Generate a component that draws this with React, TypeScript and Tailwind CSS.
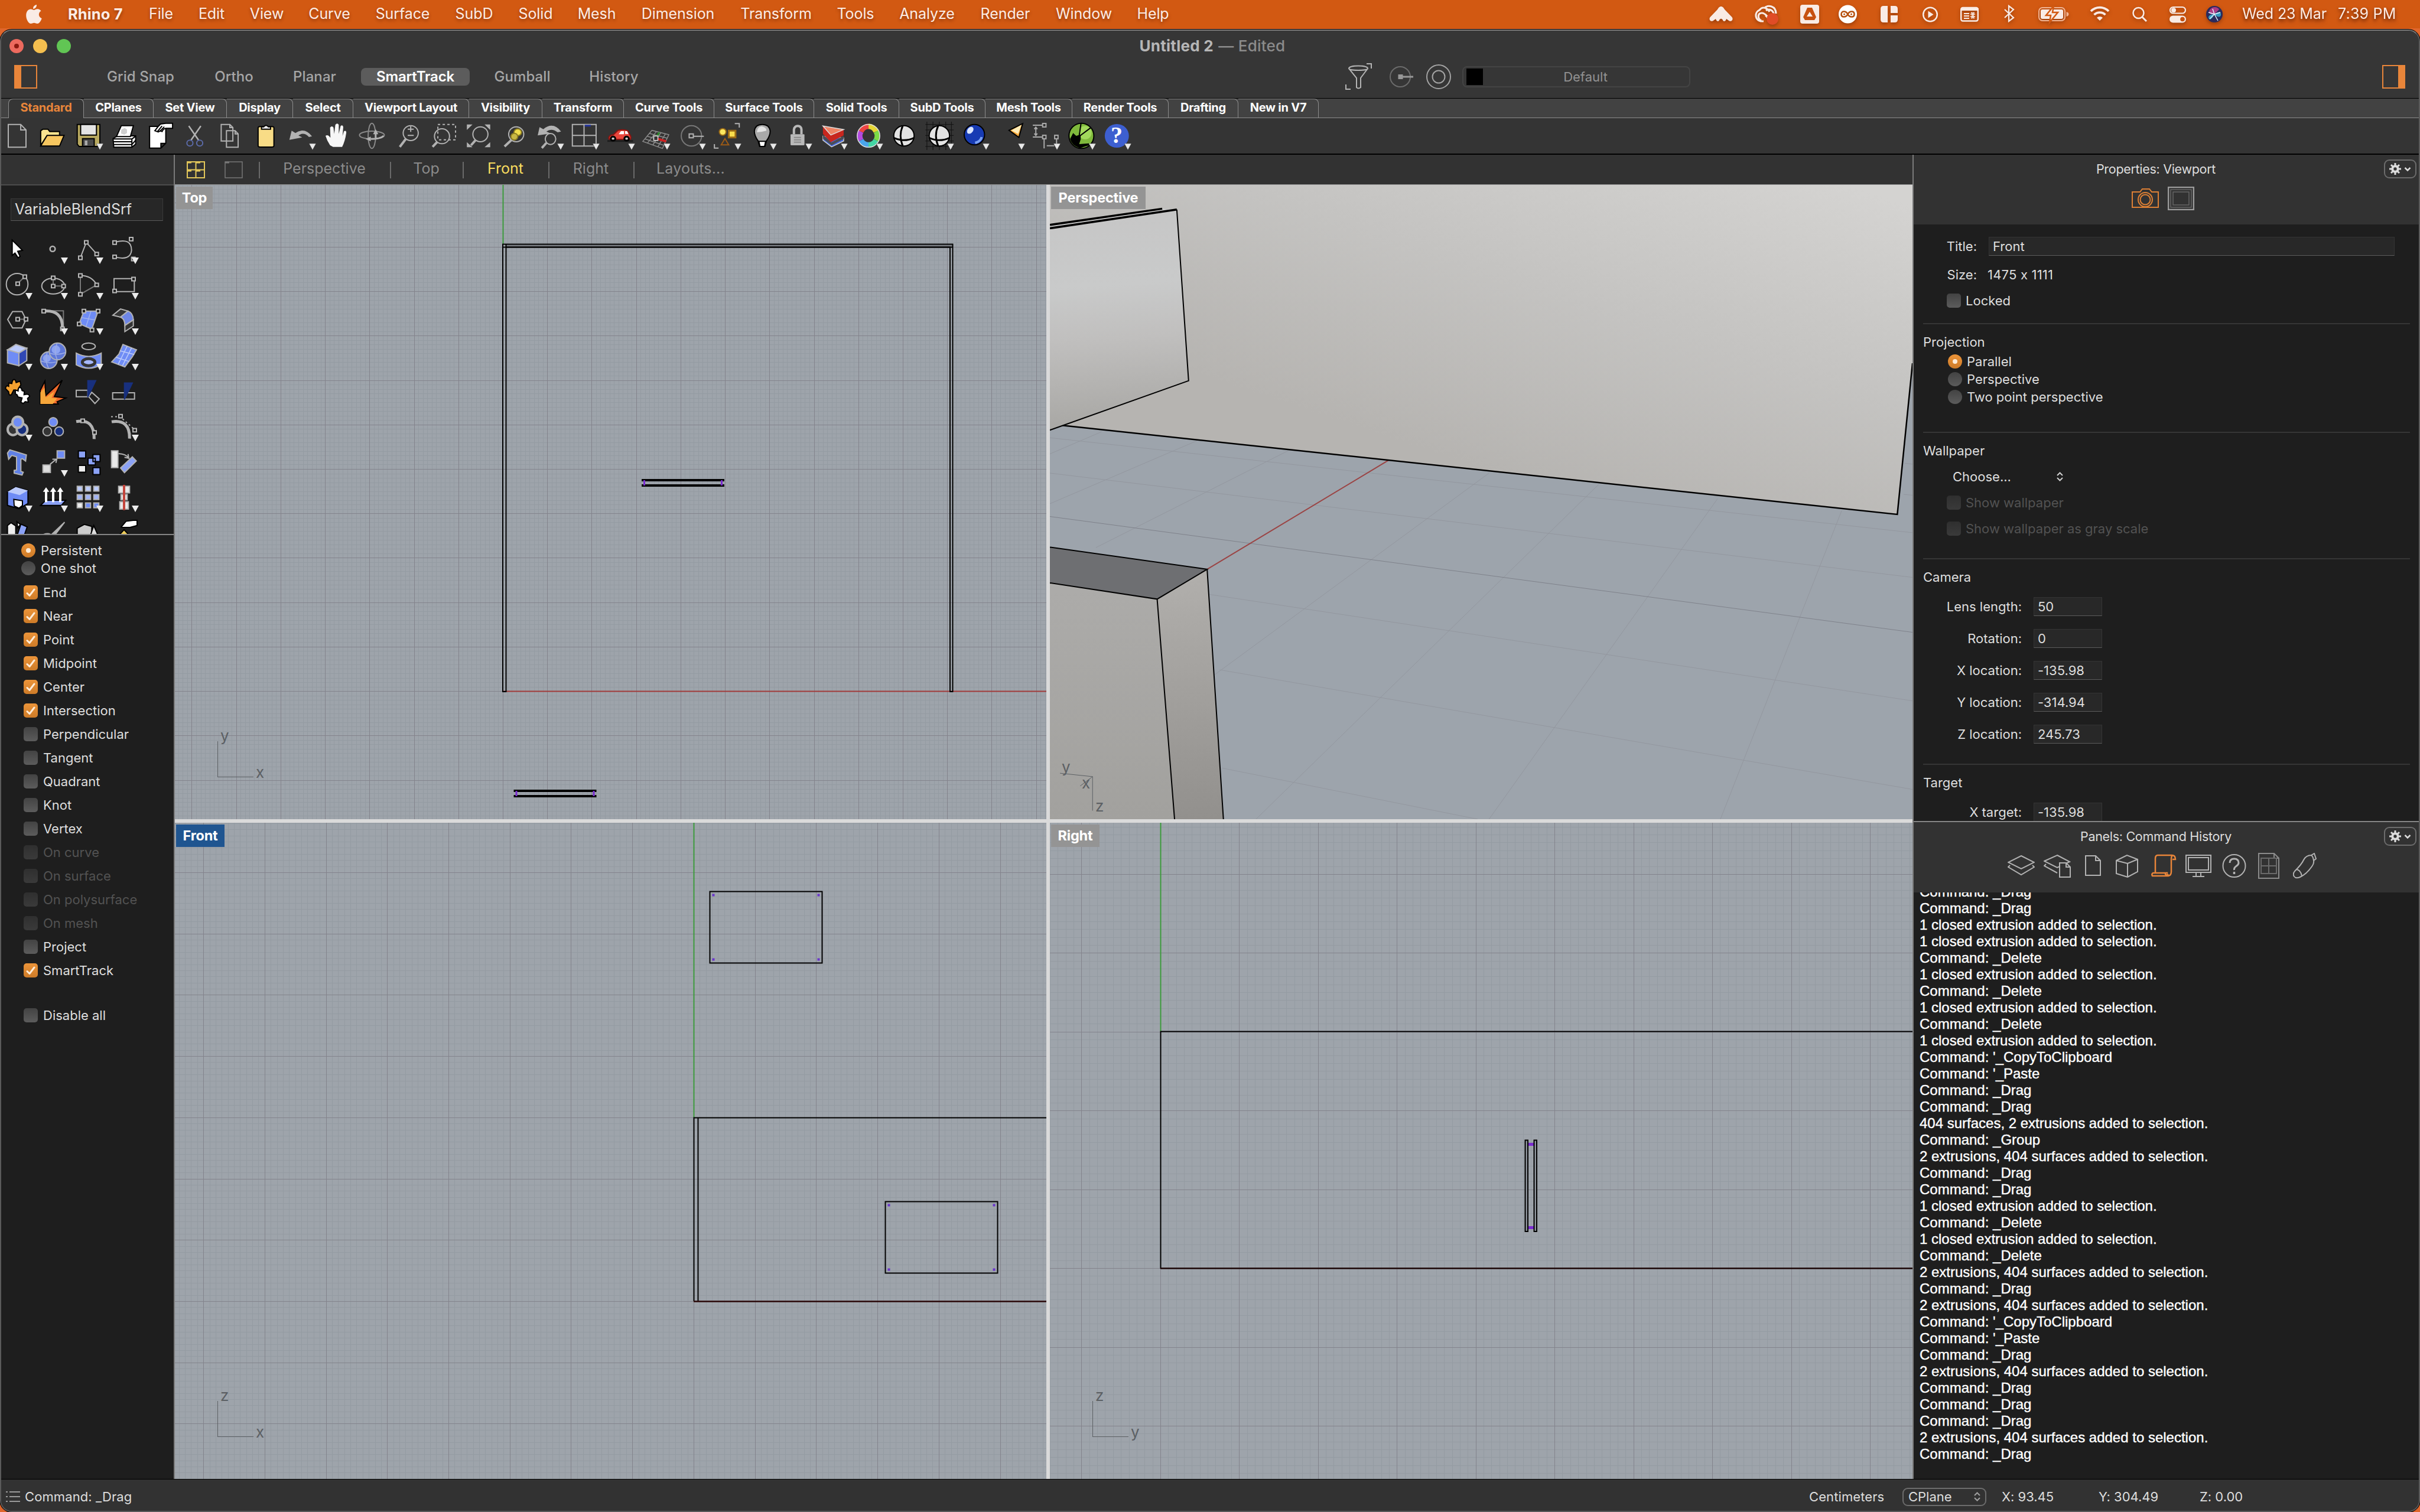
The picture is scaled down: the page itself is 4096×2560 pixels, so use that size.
import type { ReactNode } from "react";

/* ------------------------------------------------------------------ */
/* Menu bar                                                            */
/* ------------------------------------------------------------------ */

const menus: [string, string][] = [
  ["File", "w-[41px]"],
  ["Edit", "w-[46px]"],
  ["View", "w-[57px]"],
  ["Curve", "w-[71px]"],
  ["Surface", "w-[93px]"],
  ["SubD", "w-[65px]"],
  ["Solid", "w-[59px]"],
  ["Mesh", "w-[64px]"],
  ["Dimension", "w-[127px]"],
  ["Transform", "w-[121px]"],
  ["Tools", "w-[64px]"],
  ["Analyze", "w-[94px]"],
  ["Render", "w-[87px]"],
  ["Window", "w-[95px]"],
  ["Help", "w-[55px]"],
];

function StatusIcon({ cls, w, children }: { cls: string; w: number; children: ReactNode }) {
  return (
    <svg className={`h-12 shrink-0 overflow-visible ${cls}`} viewBox={`0 0 ${w} 48`} fill="none">
      {children}
    </svg>
  );
}

function MenuBar() {
  const c = "#f9ebe5";
  return (
    <div className="flex h-12 items-center bg-[#d25912] text-[25px] tracking-[-0.1px] text-[#fcece4] [text-shadow:0_3px_5px_rgba(70,20,0,.45)]">
      <svg className="ml-11 h-[34px] w-[27px] shrink-0" viewBox="0 0 27 34" fill={c}>
        <path d="M18 1c.3 3.800-2.600 7-6 7C11.700 4.500 14.500 1.400 18 1Z" />
        <path d="M13.500 10c1.500 0 3.300-1.700 6-1.700 2.600 0 4.700 1.300 6 3.200-5.400 3.100-4.600 10.400 1.200 12.700C25.300 28 22.600 33 19.300 33c-2.300 0-3-1.300-5.600-1.300-2.500 0-3.500 1.300-5.600 1.300C4.400 33 .2 26 .2 19.300.2 12.500 4 8.600 8 8.600c2.400 0 4 1.400 5.500 1.400Z" />
      </svg>
      <div className="ml-11 w-[95px] text-[25.500px] font-bold tracking-[0.1px] whitespace-nowrap">Rhino 7</div>
      <div className="ml-[42px] flex gap-[42px]">
        {menus.map(([m, w]) => (
          <div key={m} className={`${w} flex shrink-0 justify-center whitespace-nowrap`}>
            {m}
          </div>
        ))}
      </div>
      <div className="ml-auto flex items-center drop-shadow-[0_3px_3px_rgba(70,20,0,.4)]">
        <StatusIcon cls="w-[40px]" w={40}>
          <path d="M20 11c3 0 4.500 2.500 6 5l12.500 13c3 4-1 8-4.500 6.500L29 32c-1.500 5-5.500 5-6.500 1l-2.500-1.500L17.500 33c-1 4-5 4-6.500-1l-5 3.500C2.500 37-1.500 33 1.500 29L14 16c1.500-2.500 3-5 6-5Z" fill={c} />
        </StatusIcon>
        <StatusIcon cls="ml-9 w-[40px]" w={40}>
          <path d="M16 36H11A10 10 0 0 1 9 17C14 10 22 13 26 20M12 35C5 31 6 22 13 22s9 8 14 9M17 14c6-7 20-4 20 9M20 18c5-4 13-1 13 7M19 26c4 2 5 8 8 9" stroke={c} strokeWidth="3.200" />
          <circle cx="31" cy="32" r="10" fill="#e04c26" />
        </StatusIcon>
        <StatusIcon cls="ml-[38px] w-[32px]" w={32}>
          <rect y="8" width="32" height="32" rx="4" fill={c} />
          <path d="M12 13h8l7 16-3 5H8l-3-5ZM16 20l-5 8h10Z" fill="#c75110" fillRule="evenodd" />
        </StatusIcon>
        <StatusIcon cls="ml-[33px] w-[31px]" w={31}>
          <circle cx="15.500" cy="24" r="15.500" fill="#fff" />
          <path d="M15.500 24c-3-6-11-6-11 0s8 6 11 0c3-6 11-6 11 0s-8 6-11 0Z" stroke="#b5500f" strokeWidth="2.600" />
          <circle cx="9.500" cy="24" r="1.500" fill="#b5500f" />
          <circle cx="21.500" cy="24" r="1.500" fill="#b5500f" />
        </StatusIcon>
        <StatusIcon cls="ml-10 w-[29px]" w={29}>
          <path d="M5 10h7v28H5q-5 0-5-5V15q0-5 5-5ZM17 10h7q5 0 5 5v7H17ZM17 26h12v7q0 5-5 5h-7Z" fill={c} />
        </StatusIcon>
        <StatusIcon cls="ml-[42px] w-[26px]" w={26}>
          <circle cx="13" cy="24.500" r="11.800" stroke={c} strokeWidth="2.500" />
          <path d="M9.500 18.500v12l9-6Z" fill={c} />
        </StatusIcon>
        <StatusIcon cls="ml-[38px] w-[31px]" w={31}>
          <rect x="1.200" y="13" width="28.600" height="22.500" rx="3" stroke={c} strokeWidth="2.400" />
          <path d="M1 14h30v4H1ZM6 22h9v2H6ZM6 26h9v2H6ZM6 30h9v2H6Z" fill={c} />
          <path d="M18 21.500h2v9h-2m6-9h-2v9h2M17 24h8M17 28h8" stroke={c} strokeWidth="1.500" />
        </StatusIcon>
        <StatusIcon cls="ml-[43px] w-[18px]" w={18}>
          <path d="m1 16 15 14-8 6V10l8 6L1 30" stroke={c} strokeWidth="2.200" />
        </StatusIcon>
        <StatusIcon cls="ml-10 w-[51px]" w={51}>
          <rect x="1" y="13" width="44" height="22" rx="6" stroke="#f1b392" strokeWidth="2" />
          <path d="M47.500 20v8q4-1 4-4t-4-4Z" fill="#f1b392" />
          <rect x="4" y="16" width="38" height="16" rx="3" fill={c} />
          <path d="M26 10 13 26h8l-2 12 14-17h-9Z" fill={c} stroke="#d25912" strokeWidth="2.500" />
        </StatusIcon>
        <StatusIcon cls="ml-9 w-[34px]" w={34}>
          <path d="M2 19a21 21 0 0 1 30 0M7.500 25a13.500 13.500 0 0 1 19 0" stroke={c} strokeWidth="3.800" />
          <path d="M17 35l-5-5a7 7 0 0 1 10 0Z" fill={c} />
        </StatusIcon>
        <StatusIcon cls="ml-[38px] w-[25px]" w={25}>
          <circle cx="10.500" cy="22" r="9" stroke={c} strokeWidth="2.500" />
          <path d="m17 29 7 7" stroke={c} strokeWidth="3" />
        </StatusIcon>
        <StatusIcon cls="ml-[38px] w-[28px]" w={28}>
          <rect x="1" y="12" width="26" height="10.500" rx="5.250" stroke={c} strokeWidth="2.200" />
          <circle cx="7" cy="17.200" r="4" fill={c} />
          <rect y="26.500" width="28" height="12" rx="6" fill={c} />
          <circle cx="22" cy="32.500" r="3.800" fill="#c75110" />
        </StatusIcon>
        <StatusIcon cls="ml-[34px] w-[28px]" w={28}>
          <circle cx="14" cy="24" r="14" fill="#2a2a5c" />
          <path d="M14 24C4 26 2 18 10 13q8-3 12 3Z" fill="#c33d8c" opacity=".85" />
          <path d="M14 24c-8 0-12 4-9 8q4 3 9-8ZM14 24c8-6 12-4 11 2q-3 6-11-2Z" fill="#38b7d8" opacity=".8" />
          <path d="m6 32 8-8 6 11M14 24l-3-9m3 9 10-3m-10 3-10-3" stroke="#e4f4ff" strokeWidth="1.400" />
        </StatusIcon>
        <div className="ml-[33px] w-[146px] whitespace-nowrap">Wed 23 Mar</div>
        <div className="ml-4 mr-[38px] w-[101px] tracking-[0.2px] whitespace-nowrap">7:39 PM</div>
      </div>
    </div>
  );
}

/* ------------------------------------------------------------------ */
/* Title bar                                                           */
/* ------------------------------------------------------------------ */

const snapModes: [string, string][] = [
  ["Grid Snap", "w-[160px]"],
  ["Ortho", "w-[116px]"],
  ["Planar", "w-[117px]"],
  ["SmartTrack", "w-[184px]"],
  ["Gumball", "w-[138px]"],
  ["History", "w-[132px]"],
];

function TitleBar() {
  return (
    <div className="h-[115px] border-b border-black bg-[#363636]">
      <div className="flex h-[51px] items-center">
        <div className="ml-[14px] flex w-[200px] gap-4">
          <div className="flex size-6 items-center justify-center rounded-full bg-[#ed6a5e]">
            <div className="size-2 rounded-full bg-[#8c1a10]" />
          </div>
          <div className="size-6 rounded-full bg-[#f5bf4f]" />
          <div className="size-6 rounded-full bg-[#61c554]" />
        </div>
        <div className="flex-1 pl-[8px] text-center text-[26px] font-bold tracking-[0.25px] text-[#b6b6b6]">
          Untitled 2 <span className="pl-[2px] font-medium text-[#8b8b8b]">— Edited</span>
        </div>
        <div className="w-[214px]" />
      </div>
      <div className="flex h-[54px] items-center pr-[23px] pl-[22px]">
        <div className="h-10 w-[39px] border-2 border-l-[12px] border-[#e8853a]" />
        <div className="ml-[95px] flex gap-5 text-[24px] font-medium tracking-[0.1px] text-[#a6a6a6]">
          {snapModes.map(([m, w]) => (
            <div
              key={m}
              className={`${w} flex h-[30px] items-center justify-center rounded-[8px] whitespace-nowrap ${m === "SmartTrack" ? "bg-[#5c5c5c] font-semibold tracking-[-0.2px] text-white" : ""}`}
            >
              {m}
            </div>
          ))}
        </div>
        <svg className="ml-[1172px] h-[46px] w-[46px] shrink-0" viewBox="0 0 46 46" fill="none" stroke="#b4b4b4" strokeWidth="2">
          <path d="M36 1h8v8M1 36v8h8M6 9c0-6 32-6 32 0L26 25v16q-4 3-7 0V25ZM6 9c0 4 32 4 32 0" />
        </svg>
        <svg className="ml-[29px] h-10 w-[42px] shrink-0" viewBox="0 0 42 40" fill="none" strokeWidth="2">
          <circle cx="18" cy="20" r="17" stroke="#6b6b6b" />
          <path d="M18 20h22" stroke="#979797" strokeWidth="3" />
          <path d="M14.500 16h8v8h-8Z" fill="#979797" />
        </svg>
        <svg className="ml-[20px] h-[42px] w-[42px] shrink-0" viewBox="0 0 42 42" fill="none" stroke="#a3a3a3" strokeWidth="2">
          <circle cx="21" cy="21" r="20" />
          <circle cx="21" cy="21" r="10.500" />
        </svg>
        <div className="ml-[19px] flex h-[36px] w-[386px] items-center rounded-[8px] border-2 border-[#444] pl-[5px]">
          <div className="h-7 w-7 bg-black" />
          <div className="flex-1 pr-[2px] text-center text-[22px] leading-none text-[#929292]">Default</div>
        </div>
        <div className="ml-auto h-10 w-[39px] border-2 border-r-[12px] border-[#e8853a]" />
      </div>
    </div>
  );
}

/* ------------------------------------------------------------------ */
/* Toolbar tabs                                                        */
/* ------------------------------------------------------------------ */

const toolTabs: [string, string][] = [
  ["Standard", "w-[128px]"],
  ["CPlanes", "w-[118px]"],
  ["Set View", "w-[124px]"],
  ["Display", "w-[112px]"],
  ["Select", "w-[102px]"],
  ["Viewport Layout", "w-[196px]"],
  ["Visibility", "w-[124px]"],
  ["Transform", "w-[138px]"],
  ["Curve Tools", "w-[153px]"],
  ["Surface Tools", "w-[169px]"],
  ["Solid Tools", "w-[144px]"],
  ["SubD Tools", "w-[146px]"],
  ["Mesh Tools", "w-[147px]"],
  ["Render Tools", "w-[163px]"],
  ["Drafting", "w-[118px]"],
  ["New in V7", "w-[136px]"],
];

function ToolTabs() {
  return (
    <div className="flex h-[33px] bg-[#424242] text-[20px] font-bold tracking-[-0.25px] text-white">
      <div className="w-3 border-b border-[#8c8c8c]" />
      {toolTabs.map(([t, w], i) => (
        <div
          key={t}
          className={`${w} flex shrink-0 items-center justify-center rounded-tr-[8px] border-t border-r border-[#8c8c8c] pb-1 whitespace-nowrap ${i === 0 ? "rounded-tl-[8px] border-l bg-[#353535] text-[#e8853a]" : "border-b"}`}
        >
          {t}
        </div>
      ))}
      <div className="flex-1 border-b border-[#8c8c8c]" />
    </div>
  );
}

/* ------------------------------------------------------------------ */
/* Standard toolbar. Each cell is 60px wide; artwork is drawn on a      */
/* strip that is 94.08 units per cell horizontally and 180 vertically. */
/* ------------------------------------------------------------------ */

const G = "#b2b2b2";

function Mag({ x, y, dx = 16, dy = 40 }: { x: number; y: number; dx?: number; dy?: number }) {
  return (
    <g>
      <ellipse cx={x} cy={y} rx="20" ry="38" stroke={G} fill="none" />
      <path d={`M${x - 13} ${y + 30}l${-dx} ${dy}`} stroke={G} strokeWidth="4" />
    </g>
  );
}

const barIcons: { art: ReactNode; more?: boolean }[] = [
  { art: <path d="M22 632H55L69 660V748H22ZM55 632V660H69" stroke={G} /> },
  {
    art: (
      <g stroke="#000">
        <path d="M108 738V664L114 656H127L132 668H158V692H124Z" fill="#fbe48f" />
        <path d="M125 688H170L158 742H108Z" fill="#f7c760" />
      </g>
    ),
  },
  {
    more: true,
    art: (
      <g stroke="#000">
        <path d="M205 632H265V744H210L205 732Z" fill="#b8a95f" />
        <path d="M214 632H256V686H214Z" fill="#e4e4e4" />
        <path d="M219 704H250V744H219Z" fill="#4a4a4a" />
        <path d="M225 714H232V738H225Z" fill="#aaa" stroke="none" />
      </g>
    ),
  },
  {
    art: (
      <g stroke="#000">
        <path d="M300 704L312 690H360V732L350 748H302Z" fill="#fff" />
        <path d="M309 694L322 638H354L346 694Z" fill="#fff" />
        <path d="M300 706H350V748M300 720H350M302 734H350L360 712M350 706L360 692" fill="none" />
        <path d="M322 658L331 650L337 658V676L330 684L321 678Z" fill="#cfcfcf" stroke="none" />
      </g>
    ),
  },
  {
    art: (
      <g stroke="#000">
        <path d="M397 642H440V728L427 752H397ZM440 728H427V752" fill="#fff" />
        <path d="M411 664L420 642L426 630L440 626H458V652L440 652L434 656L430 668L426 664L420 670Z" fill="#fff" />
        <path d="M418 668L430 640M424 668L436 644" fill="none" />
      </g>
    ),
  },
  {
    art: (
      <g>
        <path d="M501 640L527 712M533 640L507 712" stroke={G} strokeWidth="2.500" />
        <ellipse cx="504" cy="727" rx="8" ry="15" stroke="#5b6aa8" />
        <ellipse cx="530" cy="727" rx="8" ry="15" stroke="#5b6aa8" />
      </g>
    ),
  },
  { art: <path d="M587 632H610L618 648V716H587ZM601 664H624L632 680V748H601ZM610 632V648H618M624 664V680H632" stroke={G} fill="#353535" /> },
  {
    art: (
      <g stroke="#000">
        <rect x="685" y="643" width="42" height="104" rx="6" fill="#f8dc86" />
        <path d="M694 656V644H700Q706 630 712 644H718V656Z" fill="#f2f2f2" />
      </g>
    ),
  },
  { more: true, art: <path d="M768 710L774 664L784 676Q808 644 828 692L820 696Q806 668 792 688L802 698Z" fill={G} stroke="none" /> },
  {
    art: (
      <path
        d="M876 738Q868 716 864 690Q870 680 877 700L876 648Q881 636 885 648L887 680L890 634Q895 622 899 634L899 680L904 640Q910 632 911 646L909 690L913 666Q919 660 919 674Q916 716 908 746H884Z"
        fill="#f6f6f6"
        stroke="none"
      />
    ),
  },
  {
    art: (
      <g>
        <ellipse cx="987" cy="690" rx="10" ry="64" stroke="#8a8a8a" />
        <ellipse cx="987" cy="686" rx="33" ry="20" stroke="#8a8a8a" />
        <path d="M997 656L1004 682H990ZM970 706L984 694V718Z" fill={G} stroke="none" />
        <path d="M997 680V700M984 706Q1010 706 1018 690" stroke={G} strokeWidth="3" />
      </g>
    ),
  },
  { art: <g><Mag x={1090} y={676} /><path d="M1082 656H1098M1090 642V670M1082 688H1098" stroke={G} /></g> },
  { art: <g><path d="M1162 632H1209V710H1162Z" stroke={G} strokeDasharray="4 4" /><Mag x={1173} y={692} dx={12} dy={24} /></g> },
  { art: <g><Mag x={1275} y={682} dx={12} dy={26} /><path d="M1239 632H1254L1239 660ZM1301 632V660L1286 632ZM1239 722V748H1254ZM1301 722V748H1286Z" fill={G} stroke="none" /></g> },
  {
    art: (
      <g>
        <Mag x={1370} y={682} dx={18} dy={32} />
        <ellipse cx="1374" cy="672" rx="10" ry="17" fill="#f1dd4c" stroke="#8f7f20" />
        <ellipse cx="1365" cy="694" rx="9" ry="17" fill="#c8b745" stroke="#8f7f20" />
      </g>
    ),
  },
  {
    more: true,
    art: (
      <g>
        <path d="M1427 688L1432 646L1442 656Q1468 616 1489 668L1480 672Q1464 648 1450 668L1462 678Z" fill={G} stroke="none" />
        <ellipse cx="1461" cy="706" rx="14" ry="28" stroke={G} />
        <path d="M1450 726L1438 752" stroke={G} strokeWidth="4" />
      </g>
    ),
  },
  {
    more: true,
    art: (
      <g stroke={G}>
        <path d="M1519 632H1582V742H1519ZM1550 632V742M1519 688H1582" />
        <path d="M1552 638H1568" stroke="#22339c" strokeWidth="3" />
      </g>
    ),
  },
  {
    more: true,
    art: (
      <g>
        <path d="M44 716H112" stroke="#1d1d1d" strokeWidth="3" />
        <path d="M48 706Q46 686 60 684L72 662Q88 656 98 664L104 686Q108 696 105 708H50Z" fill="#e8453c" stroke="#8a1410" />
        <path d="M74 682L80 666H88V682ZM91 666H96L100 680H91Z" fill="#fff" stroke="none" />
        <ellipse cx="59" cy="704" rx="6" ry="10" fill="#ccc" stroke="#000" strokeWidth="3" />
        <ellipse cx="95" cy="704" rx="6" ry="10" fill="#ccc" stroke="#000" strokeWidth="3" />
      </g>
    ),
  },
  {
    more: true,
    art: (
      <g stroke="#8c8c8c" strokeWidth="1.500">
        <path d="M162 662L138 718L190 754L207 684ZM174 668L150 728M186 674L164 738M198 680L178 746M156 678L203 702M150 692L199 720M144 706L194 738" />
        <path d="M172 702L182 672" stroke="#2c8a2c" strokeWidth="3" />
        <path d="M172 702L200 718" stroke="#c22" strokeWidth="4" />
        <path d="M167 691H178V713H167Z" stroke="#ddd" fill="#333" />
      </g>
    ),
  },
  {
    more: true,
    art: (
      <g>
        <ellipse cx="267" cy="690" rx="27" ry="52" stroke="#777" />
        <path d="M261 680H272V700H261ZM272 692H300" stroke={G} />
      </g>
    ),
  },
  {
    more: true,
    art: (
      <g>
        <path d="M382 628H394V648M328 732V752H339" stroke={G} />
        <ellipse cx="350" cy="670" rx="9" ry="17" fill="#fbe75f" stroke="#9b6a16" />
        <path d="M366 664H384V698H366Z" fill="#f9dd4c" stroke="#9b6a16" strokeWidth="3" />
        <path d="M356 704L366 736H346Z" stroke="#9b5a16" />
      </g>
    ),
  },
  {
    more: true,
    art: (
      <g>
        <path d="M444 716Q434 690 434 666Q436 632 455 632Q474 632 476 666Q476 690 466 716L462 744H448Z" fill="#a9a9a9" stroke="#000" />
        <path d="M441 672Q441 646 453 642Q466 646 466 664Q452 672 441 672Z" fill="#e4e4e4" stroke="none" />
        <path d="M446 718H464L461 744H449Z" fill="#fff" stroke="#000" />
      </g>
    ),
  },
  {
    more: true,
    art: (
      <g>
        <path d="M539 682V658Q541 640 549 640Q558 640 559 658V682" stroke="#b9b9b9" strokeWidth="4" />
        <rect x="530" y="682" width="37" height="56" rx="3" fill="#b9b9b9" stroke="none" />
        <path d="M539 698H558M539 710H558M539 722H558" stroke="#8b8b8b" />
      </g>
    ),
  },
  {
    more: true,
    art: (
      <g strokeWidth="1.500">
        <path d="M616 712L639 746L671 716V700L616 692Z" fill="#4468e0" stroke="#ccc" />
        <path d="M616 684L639 724L671 690V706L639 738L616 704Z" fill="#4a4d55" stroke="none" />
        <path d="M616 640L637 684L671 656V688L637 722L616 680Z" fill="#c8271e" stroke="none" />
        <path d="M616 640L671 658L637 686Z" fill="#ef8465" stroke="#ddd" />
      </g>
    ),
  },
  {
    more: true,
    art: (
      <g strokeWidth="9">
        <path d="M737 641A23 44 0 0 1 757 668" stroke="#e6d734" />
        <path d="M757 668A23 44 0 0 1 757 712" stroke="#7ddb46" />
        <path d="M757 712A23 44 0 0 1 737 736" stroke="#43d6a4" />
        <path d="M737 736A23 44 0 0 1 717 712" stroke="#4aa6ec" />
        <path d="M717 712A23 44 0 0 1 717 668" stroke="#b34be0" />
        <path d="M717 668A23 44 0 0 1 737 641" stroke="#ee4343" />
        <ellipse cx="737" cy="690" rx="30" ry="58" stroke="#ddd" strokeWidth="1.500" />
      </g>
    ),
  },
  {
    art: (
      <g stroke="#000">
        <ellipse cx="831" cy="690" rx="27" ry="52" fill="#e2e2e2" />
        <path d="M828 638Q816 690 828 742M804 700Q831 724 858 700" strokeWidth="3" />
      </g>
    ),
  },
  {
    more: true,
    art: (
      <g stroke="#000">
        <path d="M888 632H963M888 660H963M888 688H963M888 716H963M888 744H963M892 618V762M908 618V762M925 618V762M942 618V762M957 618V762" strokeWidth="1" stroke="#111" />
        <ellipse cx="925" cy="690" rx="27" ry="52" fill="#e2e2e2" />
        <path d="M922 638Q910 690 922 742M898 700Q925 724 952 700" strokeWidth="3" />
      </g>
    ),
  },
  {
    more: true,
    art: (
      <g>
        <ellipse cx="1018" cy="684" rx="27" ry="52" fill="#173bb4" stroke="#000" />
        <ellipse cx="1007" cy="662" rx="8" ry="18" fill="#dbe6ff" stroke="none" transform="rotate(12 1007 662)" />
        <path d="M1020 726Q1036 716 1037 696" stroke="#7aa2f4" strokeWidth="4" />
      </g>
    ),
  },
  {
    more: true,
    art: (
      <g stroke="#000">
        <path d="M1110 662L1146 628L1136 698Z" fill="#f7a93a" />
        <path d="M1116 662L1143 634L1134 680Z" fill="#fdebb8" stroke="none" />
      </g>
    ),
  },
  {
    more: true,
    art: (
      <g stroke="#aaa">
        <path d="M1173 636H1198M1173 696H1198M1181 648V684M1177 656L1181 646L1185 656M1177 678L1181 688L1185 678M1203 706V754M1236 706V750M1210 740H1230" />
        <path d="M1199 627H1208V645H1199ZM1199 687H1208V705H1199ZM1231 687H1240V705H1231Z" />
      </g>
    ),
  },
  {
    more: true,
    art: (
      <g>
        <ellipse cx="1302" cy="690" rx="33" ry="64" fill="#7fb93c" stroke="#000" />
        <ellipse cx="1312" cy="674" rx="17" ry="34" fill="#a2d95c" stroke="none" />
        <path d="M1301 626L1296 690M1326 650L1298 690" stroke="#000" strokeWidth="2" />
        <path d="M1280 676L1288 690L1300 684V708L1296 732L1322 728V738L1298 752Q1276 740 1272 706Z" fill="#000" stroke="none" />
      </g>
    ),
  },
  { more: true, art: <ellipse cx="1396" cy="690" rx="32" ry="60" fill="#3d5fd0" stroke="none" /> },
];

function Toolbar() {
  return (
    <div className="flex h-[62px] border-b-2 border-black bg-[#343434]">
      <div className="-ml-[2px] flex">
        {barIcons.map((icon, i) => (
          <div key={i} className="relative h-[60px] w-[60px]">
            <svg
              className="h-[60px] w-[60px] overflow-visible [&_*]:[vector-effect:non-scaling-stroke]"
              viewBox={`${i * 94.08 - (i > 16 ? 1568 : 0)} 600 94.08 180`}
              preserveAspectRatio="none"
              fill="none"
              strokeWidth="2"
            >
              {icon.art}
            </svg>
            {i === 31 && (
              <span className="absolute top-[6px] left-[20px] font-['Liberation_Serif'] text-[40px] leading-[46px] font-bold text-white">?</span>
            )}
            {icon.more && (
              <svg className="absolute top-[43px] left-[43px] h-[11px] w-[12px]" viewBox="0 0 12 11">
                <path d="M0 0H12L6 11Z" fill="#e8e8e8" stroke="#222" strokeWidth=".5" />
              </svg>
            )}
          </div>
        ))}
      </div>
    </div>
  );
}

/* ------------------------------------------------------------------ */
/* Left tool palette, 4 columns; strip is 180 x 151.7 units per cell.   */
/* ------------------------------------------------------------------ */

function H({ x, y }: { x: number; y: number }) {
  return <rect x={x - 9} y={y - 7.500} width="18" height="15" fill="#1e1e1e" stroke="#b8b8b8" />;
}

const B = "#6f8cf5";
const BL = "#bccbfb";
const BD = "#3048b4";

const palette: { art: ReactNode; more?: boolean }[] = [
  { art: <path d="M62 268V334L76 324L92 344L102 338L90 316L114 312Z" fill="#fff" stroke="#000" /> },
  { more: true, art: <ellipse cx="267" cy="306" rx="13" ry="11" stroke={G} strokeWidth="2.500" /> },
  { more: true, art: <g stroke={G}><path d="M408 344L438 278L491 328" /><H x={438} y={278} /><H x={408} y={344} /><H x={491} y={328} /></g> },
  { more: true, art: <g stroke={G}><path d="M582 278Q668 256 668 312Q662 358 582 340" /><H x={582} y={279} /><H x={582} y={340} /><H x={666} y={264} /><H x={677} y={349} /></g> },
  { more: true, art: <g stroke={G}><ellipse cx="87" cy="457" rx="55" ry="46" /><path d="M90 454L125 425" stroke="#777" /><H x={90} y={455} /><H x={126} y={425} /></g> },
  { more: true, art: <g stroke={G}><ellipse cx="270" cy="465" rx="58" ry="34" /><path d="M270 430V465H324" stroke="#777" /><H x={270} y={430} /><H x={270} y={465} /><H x={323} y={465} /></g> },
  { more: true, art: <g stroke={G}><path d="M408 420V500L491 460" stroke="#777" /><path d="M408 420Q466 420 491 460" /><H x={408} y={420} /><H x={408} y={500} /><H x={491} y={460} /></g> },
  { more: true, art: <g stroke={G}><path d="M579 433H682V489H579Z" /><H x={678} y={435} /><H x={582} y={486} /></g> },
  { more: true, art: <g stroke={G}><path d="M39 608L64 574H112L132 608L112 644H64Z" /><path d="M90 607H132" stroke="#777" /><H x={90} y={607} /><H x={132} y={607} /></g> },
  { more: true, art: <g stroke={G}><path d="M222 571H322V648" stroke="#777" /><path d="M222 572Q318 566 317 644" strokeWidth="5" /><H x={222} y={572} /><H x={317} y={648} /></g> },
  {
    more: true,
    art: (
      <g stroke={G}>
        <path d="M426 572H498L466 650L402 626Z" fill={B} />
        <path d="M462 572L436 640M414 600L482 610" strokeWidth="1.500" stroke="#9fb2ee" />
        <H x={426} y={572} /><H x={498} y={572} /><H x={402} y={627} /><H x={467} y={653} />
      </g>
    ),
  },
  {
    more: true,
    art: (
      <g stroke={G}>
        <path d="M573 590L612 563L650 572L612 598Z" fill="#353535" />
        <path d="M650 572Q676 580 677 610L634 634Q634 604 612 598Z" fill="#6e86e6" />
        <path d="M634 634L677 610V636L634 660Z" fill="#353535" />
      </g>
    ),
  },
  {
    more: true,
    art: (
      <g stroke={G}>
        <path d="M38 738L81 715L136 731L96 752Z" fill={BL} />
        <path d="M38 738L96 752V806L38 794Z" fill={B} />
        <path d="M136 731V784L96 806V752Z" fill={BD} />
      </g>
    ),
  },
  {
    more: true,
    art: (
      <g stroke={G}>
        <ellipse cx="248" cy="782" rx="42" ry="36" fill="#5f78d8" />
        <ellipse cx="292" cy="745" rx="42" ry="36" fill="#5f78d8" />
        <ellipse cx="284" cy="737" rx="22" ry="18" fill="#8ea4f2" stroke="none" />
        <ellipse cx="238" cy="774" rx="20" ry="16" fill="#8ea4f2" stroke="none" />
        <path d="M252 752Q290 764 332 750M290 710Q272 744 290 780M208 786Q246 798 284 790M240 748Q226 782 246 816" stroke="#9eaee6" strokeWidth="1.500" />
      </g>
    ),
  },
  {
    more: true,
    art: (
      <g stroke={G}>
        <ellipse cx="450" cy="723" rx="34" ry="14" />
        <path d="M387 752Q450 780 514 752V802Q450 832 387 802Z" fill={B} />
        <ellipse cx="450" cy="791" rx="32" ry="15" stroke="#353535" strokeWidth="5" fill="#a6b8fb" />
      </g>
    ),
  },
  {
    more: true,
    art: (
      <g stroke={G}>
        <path d="M624 715L693 738L672 768L634 811L567 790L604 756Z" fill={B} />
        <path d="M646 722L600 800M668 730L622 806M610 742L682 758M590 770L656 788" stroke={BL} strokeWidth="1.500" />
      </g>
    ),
  },
  {
    art: (
      <g stroke="#000">
        <path d="M44 880L60 882Q64 858 78 868L82 878L102 872L106 888L96 900L90 912L70 910L58 930Q44 936 44 918L28 904Q30 888 44 894Z" fill="#f5a12f" />
        <path d="M78 910L92 914Q92 892 108 902L112 912L124 916L122 930Q150 924 150 938L140 946L144 962L128 960L118 968L106 962L112 944L92 940L86 930L78 926Z" fill="#fff" />
      </g>
    ),
  },
  {
    art: (
      <g>
        <path d="M204 970V912L228 872L232 934L316 868L276 938L334 944L290 960L296 970Z" fill="#ee6a2c" stroke="#000" />
        <path d="M205 970V920L226 900L232 942L276 916L262 944L290 946L268 970Z" fill="#f7a63a" stroke="none" />
      </g>
    ),
  },
  { art: <g stroke={G}><path d="M387 911H446V939H387ZM450 938L466 920L504 948L482 968Z" /><path d="M446 870H486L446 940Z" fill="#18307e" stroke="#18307e" /></g> },
  { art: <g stroke={G}><path d="M572 922H683V949H572Z" /><path d="M632 880H672L632 950Z" fill="#18307e" stroke="#18307e" /></g> },
  {
    more: true,
    art: (
      <g stroke={G} strokeWidth="4">
        <ellipse cx="66" cy="1079" rx="27" ry="24" fill="#353535" />
        <ellipse cx="112" cy="1079" rx="27" ry="24" fill="#18307e" />
        <ellipse cx="90" cy="1048" rx="27" ry="24" fill={B} />
      </g>
    ),
  },
  {
    art: (
      <g stroke={G}>
        <ellipse cx="270" cy="1047" rx="22" ry="19" fill={B} />
        <ellipse cx="240" cy="1087" rx="22" ry="19" fill="#353535" />
        <ellipse cx="300" cy="1087" rx="22" ry="19" fill="#18307e" />
      </g>
    ),
  },
  { art: <g stroke={G}><path d="M387 1045Q480 1030 478 1120" strokeWidth="5" /><H x={420} y={1042} /><H x={480} y={1092} /></g> },
  {
    more: true,
    art: (
      <g stroke={G}>
        <path d="M567 1046Q660 1034 658 1118" strokeWidth="5" />
        <path d="M564 1024H610L684 1080" strokeDasharray="3 4" />
        <H x={612} y={1022} /><H x={684} y={1082} />
      </g>
    ),
  },
  { art: <path d="M38 1180L50 1166L134 1188L130 1214L114 1204L106 1206V1258L118 1262L112 1274L72 1266V1254L84 1252V1196L60 1190L44 1206Z" fill="#5f80e6" stroke={G} /> },
  { more: true, art: <g stroke={G}><path d="M218 1231H256V1263H218Z" fill="#ddd" /><path d="M290 1170H328V1202H290Z" fill={B} /><path d="M254 1228L286 1206M266 1206H288L284 1222" /></g> },
  {
    art: (
      <g stroke="#000">
        <path d="M398 1171H435V1201H398ZM472 1186H508V1216H472ZM447 1202H484V1231H447ZM472 1242H508V1272H472Z" fill="#8ba2f6" />
        <path d="M398 1233H435V1262H398Z" fill="#eee" />
      </g>
    ),
  },
  { art: <g stroke={G}><path d="M566 1170H599V1242H566Z" fill="#e8e8e8" /><path d="M672 1196L692 1214L632 1264L612 1244Z" fill="#8ba2f6" /><path d="M602 1182Q640 1184 652 1200M632 1198L654 1202L650 1184" /></g> },
  {
    more: true,
    art: (
      <g stroke="#000">
        <path d="M38 1346L80 1325L142 1340V1396L96 1418L38 1404Z" fill={B} />
        <path d="M38 1346L80 1325L142 1340L100 1360Z" fill={BL} stroke="none" />
        <path d="M70 1378L114 1384V1404L96 1416L72 1406Z" fill="#fff" />
      </g>
    ),
  },
  {
    more: true,
    art: (
      <g>
        <path d="M206 1404L232 1382H334L312 1404Z" fill="#8ba2f6" stroke="#000" />
        <path d="M228 1390V1346H218L234 1326L250 1346H240V1390ZM264 1390V1346H254L270 1326L286 1346H276V1390ZM300 1390V1346H290L306 1326L322 1346H312V1390Z" fill="#fff" stroke="none" />
      </g>
    ),
  },
  {
    more: true,
    art: (
      <g stroke={G}>
        <path d="M392 1322H418V1343H392ZM434 1322H460V1343H434ZM476 1322H502V1343H476Z" fill={BL} />
        <path d="M392 1358H418V1379H392ZM434 1358H460V1379H434ZM476 1358H502V1379H476Z" fill="#a0b3f7" />
        <path d="M434 1393H460V1414H434ZM476 1393H502V1414H476Z" fill={B} />
        <path d="M392 1393H418V1414H392Z" fill="#eee" />
      </g>
    ),
  },
  {
    more: true,
    art: (
      <g stroke={G}>
        <path d="M602 1322H658V1350H602ZM614 1357H646V1380H614ZM608 1388H652V1420H608Z" fill="#e8e8e8" />
        <path d="M624 1316H636V1424H624Z" fill="#c4453c" stroke="none" />
      </g>
    ),
  },
  { art: <g stroke="#000"><path d="M38 1490L56 1478L80 1492V1600H38Z" fill="#eee" /><path d="M86 1474L104 1486L90 1500Z" fill="#fff" /><path d="M106 1484L138 1496L112 1560H76Z" fill="#8ba2f6" /></g> },
  { art: <path d="M216 1530Q244 1520 260 1530L328 1476L270 1540" fill={G} stroke={G} /> },
  { art: <g stroke="#000"><path d="M392 1502L428 1485L466 1494V1560H392Z" fill="#ccc" /><path d="M476 1490L502 1540H456Z" fill="#ddd" /></g> },
  { art: <g><path d="M616 1496L640 1472L676 1468H696V1490L660 1498L626 1498Z" fill="#fff" stroke="#000" /><path d="M606 1530L630 1508L654 1530Z" fill="#f1cf5b" stroke="#000" /></g> },
];

function Palette() {
  return (
    <div className="h-[514px] overflow-hidden">
      <div className="-ml-[2px] mt-[0.5px] grid w-[240px] grid-cols-4">
        {palette.map((p, i) => (
          <div key={i} className="relative h-[60px] w-[60px]">
            <svg
              className="h-[60px] w-[60px] overflow-visible [&_*]:[vector-effect:non-scaling-stroke]"
              viewBox={`${(i % 4) * 180} ${229 + Math.floor(i / 4) * 151.7} 180 151.7`}
              preserveAspectRatio="none"
              fill="none"
              strokeWidth="2"
            >
              {p.art}
            </svg>
            {p.more && (
              <svg className="absolute top-[45px] left-[43px] h-[11px] w-[12px]" viewBox="0 0 12 11">
                <path d="M0 0H12L6 11Z" fill="#ececec" />
              </svg>
            )}
          </div>
        ))}
      </div>
    </div>
  );
}

/* ------------------------------------------------------------------ */
/* Controls                                                            */
/* ------------------------------------------------------------------ */

function Check({ on, dim }: { on?: boolean; dim?: boolean }) {
  return (
    <div
      className={`flex size-6 shrink-0 items-center justify-center rounded-[5px] bg-linear-to-b ${on ? "from-[#ec9439] to-[#cd7b28]" : dim ? "from-[#2f2f2f] to-[#3a3a3a]" : "from-[#434343] to-[#5c5c5c]"}`}
    >
      {on && (
        <svg className="h-4 w-4" viewBox="0 0 16 16" fill="none" stroke="#fdecd8" strokeWidth="3" strokeLinecap="round" strokeLinejoin="round">
          <path d="M2 9.500 6 13.500 14 3" />
        </svg>
      )}
    </div>
  );
}

function Radio({ on }: { on?: boolean }) {
  return (
    <div
      className={`flex size-6 shrink-0 items-center justify-center rounded-full bg-linear-to-b ${on ? "from-[#ec9439] to-[#cd7b28]" : "from-[#434343] to-[#5c5c5c]"}`}
    >
      {on && <div className="size-2 rounded-full bg-[#fdecd8]" />}
    </div>
  );
}

const osnaps: [string, boolean, boolean][] = [
  ["End", true, false],
  ["Near", true, false],
  ["Point", true, false],
  ["Midpoint", true, false],
  ["Center", true, false],
  ["Intersection", true, false],
  ["Perpendicular", false, false],
  ["Tangent", false, false],
  ["Quadrant", false, false],
  ["Knot", false, false],
  ["Vertex", false, false],
  ["On curve", false, true],
  ["On surface", false, true],
  ["On polysurface", false, true],
  ["On mesh", false, true],
  ["Project", false, false],
  ["SmartTrack", true, false],
];

function LeftPanel() {
  return (
    <div className="w-[292px] shrink-0 bg-[#1e1e1e] text-[22px] text-[#dedede]">
      <div className="h-[52px] border-b-2 border-[#4c4c4c] bg-[#323232]" />
      <div className="mt-[22px] ml-4 flex h-[38px] w-[258px] items-center border border-[#3a3a3a] border-b-[#5a5a5a] bg-[#272727] pl-[6px] text-[25px]">
        VariableBlendSrf
      </div>
      <div className="h-4" />
      <Palette />
      <div className="h-[2px] bg-[#858585]" />
      <div className="h-[11px]" />
      <div className="flex h-[30px] items-center gap-[9px] pl-[34px]">
        <Radio on /> Persistent
      </div>
      <div className="flex h-[30px] items-center gap-[9px] pl-[34px]">
        <Radio /> One shot
      </div>
      <div className="h-[6px]" />
      {osnaps.map(([t, on, dim]) => (
        <div key={t} className={`flex h-10 items-center gap-[9px] pl-[38px] ${dim ? "text-[#525252]" : ""}`}>
          <Check on={on} dim={dim} /> {t}
        </div>
      ))}
      <div className="mt-9 flex h-10 items-center gap-[9px] pl-[38px]">
        <Check /> Disable all
      </div>
    </div>
  );
}

/* ------------------------------------------------------------------ */
/* Viewports                                                           */
/* ------------------------------------------------------------------ */

function GridLines({ w, h, ox, oy, step }: { w: number; h: number; ox: number; oy: number; step: number }) {
  const lines = (origin: number, size: number) => {
    const s = step / 10;
    const out: { p: number; major: boolean }[] = [];
    for (let k = Math.ceil(-origin / s); origin + k * s < size; k++) {
      out.push({ p: Math.round(origin + k * s - 0.5) + 0.5, major: k % 10 === 0 });
    }
    return out;
  };
  const xs = lines(ox, w);
  const ys = lines(oy, h);
  const path = (major: boolean) =>
    xs.filter((l) => l.major === major).map((l) => `M${l.p} 0V${h}`).join("") +
    ys.filter((l) => l.major === major).map((l) => `M0 ${l.p}H${w}`).join("");
  return (
    <g fill="none">
      <path d={path(false)} stroke="#949ba2" />
      <path d={path(true)} stroke="#83838c" />
    </g>
  );
}

function Label({ text, active, w }: { text: string; active?: boolean; w: string }) {
  return (
    <div
      className={`absolute top-[3px] left-[2px] flex h-[38px] items-center justify-center text-[23.500px] font-bold tracking-[-0.2px] text-white ${w} ${active ? "bg-[#1f5590]" : "bg-[#949494]"}`}
    >
      {text}
    </div>
  );
}

function Axes({ up, right, at }: { up: string; right: string; at: string }) {
  return (
    <div className={`absolute left-[72px] h-[61px] w-[61px] border-b border-l border-[#5c6064] text-[26px] leading-[26px] text-[#5c6064] ${at}`}>
      <span className="absolute -top-[22px] left-[4px]">{up}</span>
      <span className="absolute top-[40px] left-[64px]">{right}</span>
    </div>
  );
}

function TopView() {
  return (
    <div className="relative h-[1074px] w-[1475px] overflow-hidden bg-[#9ea4ab]">
      <svg className="block h-[1074px] w-[1475px]" viewBox="0 0 1475 1074" fill="none">
        <GridLines w={1475} h={1074} ox={555.5} oy={857.6} step={75.22} />
        <path d="M555.500 0V100" stroke="#3c9a3c" strokeWidth="2" />
        <path d="M555 857.500H1475" stroke="#a03a3a" strokeWidth="2" />
        <path d="M560 103H1316" stroke="#777b80" strokeWidth="3" />
        <g stroke="#000" strokeWidth="2">
          <path d="M555 858V100.500H1316.500V858H1312V105.500H560.500V858Z" />
          <path d="M555 105.500H1316M560.500 100V106" />
        </g>
        {[
          [790, 500],
          [573.5, 1026],
        ].map(([x, y]) => (
          <g key={x}>
            <path d={`M${x} ${y}h140M${x} ${y + 9}h140`} stroke="#000" strokeWidth="4" />
            <path d={`M${x + 4.5} ${y}v9M${x + 135.5} ${y}v9`} stroke="#7a2bd0" strokeWidth="3" />
          </g>
        ))}
      </svg>
      <Label text="Top" w="w-[62px]" />
      <Axes up="y" right="x" at="top-[942px]" />
    </div>
  );
}

function PerspectiveView() {
  return (
    <div className="relative h-[1074px] w-[1460px] overflow-hidden bg-[#9da4ac]">
      <svg
        className="block h-[1074px] w-[1460px] [&_*]:[vector-effect:non-scaling-stroke]"
        viewBox="18 18 1536 1490"
        preserveAspectRatio="none"
        fill="none"
      >
        <defs>
          <linearGradient id="wall" gradientUnits="userSpaceOnUse" x1="1400" y1="0" x2="1050" y2="800">
            <stop offset="0" stopColor="#d4d3d1" />
            <stop offset=".5" stopColor="#c4c3c1" />
            <stop offset="1" stopColor="#b6b4b1" />
          </linearGradient>
          <linearGradient id="slab" gradientUnits="userSpaceOnUse" x1="80" y1="80" x2="120" y2="580">
            <stop offset="0" stopColor="#c6c6c6" />
            <stop offset=".35" stopColor="#c9caca" />
            <stop offset=".6" stopColor="#c0bfbe" />
            <stop offset="1" stopColor="#a9a8a5" />
          </linearGradient>
          <linearGradient id="side" gradientUnits="userSpaceOnUse" x1="240" y1="950" x2="290" y2="1508">
            <stop offset="0" stopColor="#b0aeab" />
            <stop offset="1" stopColor="#92908d" />
          </linearGradient>
          <linearGradient id="face" gradientUnits="userSpaceOnUse" x1="100" y1="970" x2="120" y2="1508">
            <stop offset="0" stopColor="#acaba9" />
            <stop offset="1" stopColor="#a2a19e" />
          </linearGradient>
        </defs>
        <path
          d="M18 612L1554 835M18 695L1554 940M302 980L1554 1230M320 1157L1554 1438M325 1388L780 1508M1540 672L1554 674M1538 745L1554 747M110 598L18 650M280 619L18 767M443 642L100 870M800 695L310 1170M995 722L385 1508M1207 755L800 1508M1428 783L1212 1508"
          stroke="#93979f"
        />
        <path d="M18 797L1554 1069" stroke="#7f828b" />
        <path d="M298 921L622 664" stroke="#9b4444" strokeWidth="2" />
        <path d="M18 18H1554V437L1527 792L40 583L18 583Z" fill="url(#wall)" />
        <path d="M40 583L1527 792L1554 437" stroke="#000" strokeWidth="2.500" />
        <path d="M18 112L218 74L244 76L265 478L18 594Z" fill="url(#slab)" />
        <path d="M18 112L218 74M18 120L244 76" stroke="#000" strokeWidth="3.500" />
        <path d="M244 76L265 478L18 594" stroke="#000" strokeWidth="2" />
        <path d="M18 869L298 921L209 991L18 953Z" fill="#6e6f72" />
        <path d="M18 953L209 991L240 1508H18Z" fill="url(#face)" />
        <path d="M209 991L298 921L327 1508H240Z" fill="url(#side)" />
        <path d="M18 869L298 921L209 991L18 953M209 991L240 1508M298 921L327 1508" stroke="#000" strokeWidth="2" />
        <path d="M36 1400L94 1408V1488M94 1408L72 1430" stroke="#5c6064" />
      </svg>
      <Label text="Perspective" w="w-[160px]" />
      <div className="absolute top-[973px] left-[20px] h-20 w-20 text-[26px] leading-[26px] text-[#5c6064]">
        <span className="absolute top-0 left-0">y</span>
        <span className="absolute top-[27px] left-[34px]">x</span>
        <span className="absolute top-[66px] left-[57px]">z</span>
      </div>
    </div>
  );
}

function FrontView() {
  return (
    <div className="relative h-[1111px] w-[1475px] overflow-hidden bg-[#9ea4ab]">
      <svg className="block h-[1111px] w-[1475px]" viewBox="0 0 1475 1111" fill="none">
        <GridLines w={1475} h={1111} ox={878.4} oy={810.5} step={103.72} />
        <path d="M878.500 0V499" stroke="#3c9a3c" strokeWidth="2" />
        <path d="M1475 499.500H878.500V810M885.500 500V810" stroke="#000" strokeWidth="2" />
        <path d="M878 810.500H1475" stroke="#280606" strokeWidth="2.500" />
        {[
          [905.5, 116.5],
          [1202.5, 641.5],
        ].map(([x, y]) => (
          <g key={x}>
            <rect x={x} y={y} width="190" height="121" stroke="#000" strokeWidth="2" />
            <path
              d={`M${x + 4} ${y + 4}h4v4h-4ZM${x + 182} ${y + 4}h4v4h-4ZM${x + 4} ${y + 113}h4v4h-4ZM${x + 182} ${y + 113}h4v4h-4Z`}
              fill="#6a35cc"
            />
          </g>
        ))}
      </svg>
      <Label text="Front" active w="w-[82px]" />
      <Axes up="z" right="x" at="top-[979px]" />
    </div>
  );
}

function RightView() {
  return (
    <div className="relative h-[1111px] w-[1460px] overflow-hidden bg-[#9ea4ab]">
      <svg className="block h-[1111px] w-[1460px]" viewBox="0 0 1460 1111" fill="none">
        <GridLines w={1460} h={1111} ox={187.4} oy={754.6} step={133.45} />
        <path d="M187.500 0V353" stroke="#3c9a3c" strokeWidth="2" />
        <path d="M1460 353.500H187.500V755" stroke="#000" strokeWidth="2" />
        <path d="M187 754.500H1460" stroke="#1a0404" strokeWidth="2.500" />
        <path d="M808 542h12v5h-12ZM808 683h12v5h-12Z" fill="#7a2bd0" />
        <path d="M804.500 537.500h4.500v154.500h-4.500ZM819.500 537.500h4.500v154.500h-4.500Z" stroke="#000" strokeWidth="2" fill="#8f959d" />
      </svg>
      <Label text="Right" w="w-[82px]" />
      <Axes up="z" right="y" at="top-[979px]" />
    </div>
  );
}

const viewTabs: [string, string][] = [
  ["Perspective", "w-[220px]"],
  ["Top", "w-[121px]"],
  ["Front", "w-[143px]"],
  ["Right", "w-[142px]"],
];

function ViewArea() {
  return (
    <div className="flex w-[2945px] shrink-0 flex-col border-x-2 border-[#7a7a7a]">
      <div className="flex h-[51px] items-center border-b border-[#8f8f8f] bg-[#323232] pb-[3px] text-[25px] text-[#8b8b8b]">
        <svg className="mt-1 ml-5 h-[29px] w-[31px]" viewBox="0 0 31 29" fill="none" stroke="#e3c75a" strokeWidth="2">
          <path d="M1 1H30V28H1ZM15.500 1V28M1 14.500H30" />
          <path d="M1 2H8M16 2H23M1 16H8M16 16H23" strokeWidth="3" />
        </svg>
        <svg className="mt-1 ml-[33px] h-[29px] w-[31px]" viewBox="0 0 31 29" fill="none" stroke="#777" strokeWidth="1.500">
          <path d="M1 1H30V28H1Z" />
          <path d="M1 2H8" strokeWidth="3" />
        </svg>
        <div className="mt-1 ml-[27px] h-7 w-[2px] bg-[#6a6a6a]" />
        {viewTabs.map(([t, w]) => (
          <div key={t} className="flex items-center">
            <div className={`${w} pr-[2px] text-center ${t === "Front" ? "text-[#f8dc5f]" : ""}`}>{t}</div>
            <div className="mt-1 h-7 w-[2px] bg-[#6a6a6a]" />
          </div>
        ))}
        <div className="ml-[37px] tracking-[0.2px]">Layouts...</div>
      </div>
      <div className="grid grid-cols-[1475px_1460px] gap-[6px] bg-[#dadada]">
        <TopView />
        <PerspectiveView />
        <FrontView />
        <RightView />
      </div>
    </div>
  );
}

/* ------------------------------------------------------------------ */
/* Right side panels                                                   */
/* ------------------------------------------------------------------ */

function GearButton() {
  return (
    <div className="mr-1 flex h-[32px] w-[55px] items-center justify-center gap-[5px] rounded-[9px] border-2 border-[#6c6c6c]">
      <svg className="h-5 w-5" viewBox="0 0 20 20" fill="none" stroke="#dcdcdc">
        <circle cx="10" cy="10" r="4.700" strokeWidth="4" />
        <path d="M10 0V4M10 16V20M0 10H4M16 10H20M3 3 6 6M14 14 17 17M17 3 14 6M3 17 6 14" strokeWidth="3" />
      </svg>
      <svg className="h-3 w-3" viewBox="0 0 12 12" fill="none" stroke="#dcdcdc" strokeWidth="2.500">
        <path d="m1.500 4 4.500 4.500L10.500 4" />
      </svg>
    </div>
  );
}

function PanelTitle({ text }: { text: string }) {
  return (
    <div className="flex items-center">
      <div className="w-[41px]" />
      <div className="flex-1 pr-[17px] text-center text-[21.500px] tracking-[-0.3px]">{text}</div>
      <GearButton />
    </div>
  );
}

function Field({ label, value }: { label: string; value: string }) {
  return (
    <div className="flex h-[54px] items-center">
      <div className="w-[183px] text-right">{label}</div>
      <div className="ml-5 flex h-[32px] w-[116px] items-center border border-[#343434] border-b-[#5c5c5c] bg-[#282828] pl-[6px]">{value}</div>
    </div>
  );
}

function Rule() {
  return <div className="mr-[15px] ml-4 h-[2px] bg-[#363636]" />;
}

function Properties() {
  return (
    <div className="h-[1128px] overflow-hidden bg-[#1e1e1e] text-[22px] text-[#dedede]">
      <div className="h-[118px] bg-[#323232] pt-2">
        <PanelTitle text="Properties: Viewport" />
        <div className="mt-[14px] flex items-center gap-[15px] pl-[369px]">
          <svg className="h-[34px] w-[46px]" viewBox="0 0 46 34" fill="none" stroke="#dd8035" strokeWidth="2">
            <path d="M1 6H14L18 1H30L34 6H45V32H1Z" />
            <circle cx="23" cy="19" r="12" />
            <circle cx="23" cy="19" r="8.500" />
          </svg>
          <svg className="h-10 w-[45px]" viewBox="0 0 45 40" fill="none">
            <path d="M1 1H44V39H1Z" stroke="#9c9c9c" strokeWidth="2.500" />
            <path d="M5 5H40V35H5ZM9 9H36V31H9Z" stroke="#676767" strokeWidth="1.500" />
          </svg>
        </div>
      </div>
      <div className="mt-5 flex h-[34px] items-center">
        <div className="w-[107px] text-right">Title:</div>
        <div className="ml-5 flex h-[32px] w-[687px] items-center border border-[#343434] border-b-[#5c5c5c] bg-[#282828] pl-[6px]">Front</div>
      </div>
      <div className="mt-4 flex h-[30px] items-center">
        <div className="w-[107px] text-right">Size:</div>
        <div className="ml-[18px] tracking-[0.2px]">1475 x 1111</div>
      </div>
      <div className="mt-[14px] flex h-[30px] items-center gap-2 pl-[56px]">
        <Check /> Locked
      </div>
      <div className="h-[23px]" />
      <Rule />
      <div className="mt-[15px] flex h-[30px] items-center pl-4">Projection</div>
      <div className="mt-[3px] flex h-[30px] items-center gap-2 pl-[58px]">
        <Radio on /> Parallel
      </div>
      <div className="flex h-[30px] items-center gap-2 pl-[58px]">
        <Radio /> Perspective
      </div>
      <div className="flex h-[30px] items-center gap-2 pl-[58px]">
        <Radio /> Two point perspective
      </div>
      <div className="h-[44px]" />
      <Rule />
      <div className="mt-[15px] flex h-[30px] items-center pl-4">Wallpaper</div>
      <div className="mt-[14px] flex h-[30px] items-center pl-[66px]">
        <div className="w-[176px]">Choose...</div>
        <svg className="h-4 w-[11px]" viewBox="0 0 11 16" fill="none" stroke="#cfcfcf" strokeWidth="2">
          <path d="M1 6 5.500 1.500 10 6M1 10l4.500 4.500L10 10" />
        </svg>
      </div>
      <div className="mt-[14px] flex h-[30px] items-center gap-2 pl-[56px] text-[#525252]">
        <Check dim /> Show wallpaper
      </div>
      <div className="mt-[14px] flex h-[30px] items-center gap-2 pl-[56px] text-[#525252]">
        <Check dim /> Show wallpaper as gray scale
      </div>
      <div className="h-[35px]" />
      <Rule />
      <div className="mt-[15px] flex h-[30px] items-center pl-4">Camera</div>
      <div className="h-2" />
      <Field label="Lens length:" value="50" />
      <Field label="Rotation:" value="0" />
      <Field label="X location:" value="-135.98" />
      <Field label="Y location:" value="-314.94" />
      <Field label="Z location:" value="245.73" />
      <div className="h-[23px]" />
      <Rule />
      <div className="mt-[15px] flex h-[30px] items-center pl-4">Target</div>
      <div className="mt-[8px]">
        <Field label="X target:" value="-135.98" />
      </div>
    </div>
  );
}

const drag = "Command: _Drag";
const del = "Command: _Delete";
const one = "1 closed extrusion added to selection.";
const two = "2 extrusions, 404 surfaces added to selection.";
const copy = "Command: '_CopyToClipboard";
const paste = "Command: '_Paste";

const history = [
  drag, drag, one, one, del, one, del, one, del, one, copy, paste, drag, drag,
  "404 surfaces, 2 extrusions added to selection.",
  "Command: _Group",
  two, drag, drag, one, del, one, del, two, drag, two, copy, paste, drag, two, drag, drag, drag, two, drag,
];

function CommandHistory() {
  return (
    <div className="flex-1 overflow-hidden bg-[#1e1e1e] text-[#dedede]">
      <div className="h-[119px] bg-[#323232] pt-2">
        <PanelTitle text="Panels: Command History" />
        <div className="mt-[14px] flex h-10 items-center pl-[159px] [&_svg]:shrink-0">
          <svg className="h-9 w-[46px]" viewBox="0 0 46 36" fill="none" stroke={G} strokeWidth="2">
            <path d="M23 1 45 12 23 23 1 12ZM4 17 1 20 23 33 45 20 42 17" />
          </svg>
          <svg className="ml-[15px] h-10 w-[46px]" viewBox="0 0 46 40" fill="none" stroke={G} strokeWidth="2">
            <path d="M23 2 44 13 23 23 1 12ZM4 17 1 20 23 32" />
            <path d="M27 15H38L45 22V39H27ZM38 15V22H45" fill="#323232" />
          </svg>
          <svg className="ml-[24px] h-10 w-[28px]" viewBox="0 0 28 40" fill="none" stroke={G} strokeWidth="2">
            <path d="M1 3H18L26 11V36H1ZM18 3V11H26" />
          </svg>
          <svg className="ml-[24px] h-10 w-[38px]" viewBox="0 0 38 40" fill="none" stroke={G} strokeWidth="2">
            <path d="M1 11 19 2 37 9V30L20 39 1 33ZM1 11 20 16 37 9M20 16V39" />
          </svg>
          <svg className="ml-[21px] h-10 w-[44px]" viewBox="0 0 44 40" fill="none" stroke="#e8853a" strokeWidth="2.500">
            <path d="M37 9H42Q42 2 36 2H12Q8 2 8 8V32H4Q1 34 3 37H30Q35 36 35 30V8Q35 3 38 2M8 32H29Q25 31 25 34Q27 37 30 34" />
          </svg>
          <svg className="ml-[15px] h-10 w-[44px]" viewBox="0 0 44 40" fill="none" stroke={G} strokeWidth="2">
            <path d="M1 2H43V31H1ZM5 6H39V27H5ZM18 31V37M26 31V37M12 38H32" />
          </svg>
          <svg className="ml-[18px] h-10 w-[41px]" viewBox="0 0 41 40" fill="none" stroke={G} strokeWidth="2">
            <circle cx="20.500" cy="20" r="19" />
            <path d="M13 15Q13 8 20.500 8T28 15Q28 18 24 20.500T20.500 27" strokeWidth="3" />
            <path d="M20.500 30V34" strokeWidth="3.500" />
          </svg>
          <svg className="ml-[20px] h-11 w-[36px]" viewBox="0 0 36 44" fill="none" stroke="#8b8b8b" strokeWidth="2">
            <path d="M1 1H27L35 9V43H1ZM27 1V9H35" />
            <path d="M5 9H31V35H5ZM18 9V35M5 22H31" stroke="#6a6a6a" />
          </svg>
          <svg className="ml-[23px] h-[44px] w-[40px]" viewBox="0 0 40 44" fill="none" stroke={G} strokeWidth="2">
            <path d="M31 4 36 1 39 10 35 13M31 4Q22 4 18 12 15 19 3 31-1 36 2 40 5 44 12 41 23 36 32 23 36 18 35 13 34 6 31 4ZM6 28Q13 29 15 39" />
          </svg>
        </div>
      </div>
      <div className="h-[994px] overflow-hidden">
        <div className="-mt-[15px] pl-[10px] font-['Liberation_Sans'] text-[24px] leading-[28px] text-white [-webkit-text-stroke:0.4px_#fff]">
          {history.map((line, i) => (
            <div key={i}>{line}</div>
          ))}
        </div>
      </div>
    </div>
  );
}

function StatusBar() {
  return (
    <div className="flex h-[54px] items-center border-t border-black bg-[#323232] pt-[5px] text-[22px] text-[#dedede]">
      <svg className="ml-2 h-5 w-6" viewBox="0 0 24 20" fill="none" stroke="#9a9a9a" strokeWidth="2">
        <path d="M0 2H3M0 10H3M0 18H3M6 2H24M6 10H24M6 18H24" />
      </svg>
      <div className="ml-2 w-[3020px] tracking-[0.1px]">Command: _Drag</div>
      <div className="w-[158px] tracking-[0.1px]">Centimeters</div>
      <div className="flex h-[31px] w-[142px] items-center justify-between rounded-[9px] border-2 border-[#6c6c6c] pr-2 pl-2">
        CPlane
        <svg className="h-4 w-[11px]" viewBox="0 0 11 16" fill="none" stroke="#a0a0a0" strokeWidth="2">
          <path d="M1 6 5.500 1.500 10 6M1 10l4.500 4.500L10 10" />
        </svg>
      </div>
      <div className="ml-[26px] w-[164px]">X: 93.45</div>
      <div className="w-[171px]">Y: 304.49</div>
      <div>Z: 0.00</div>
    </div>
  );
}

export default function App() {
  return (
    <div className="h-[2560px] w-[4096px] overflow-hidden bg-[#e0662c] font-['Inter',sans-serif] [font-feature-settings:'calt'_0]">
      <MenuBar />
      <div className="mt-[2px] h-[2510px] overflow-hidden rounded-[20px] border-2 border-[#5a5a5a] border-t-[#7a7a7a] bg-[#323232] shadow-[0_0_0_1px_#000]">
        <TitleBar />
        <ToolTabs />
        <Toolbar />
        <div className="flex h-[2242px] border-black">
          <LeftPanel />
          <ViewArea />
          <div className="flex flex-1 flex-col">
            <Properties />
            <div className="h-[2px] shrink-0 bg-[#858585]" />
            <CommandHistory />
          </div>
        </div>
        <StatusBar />
      </div>
    </div>
  );
}
